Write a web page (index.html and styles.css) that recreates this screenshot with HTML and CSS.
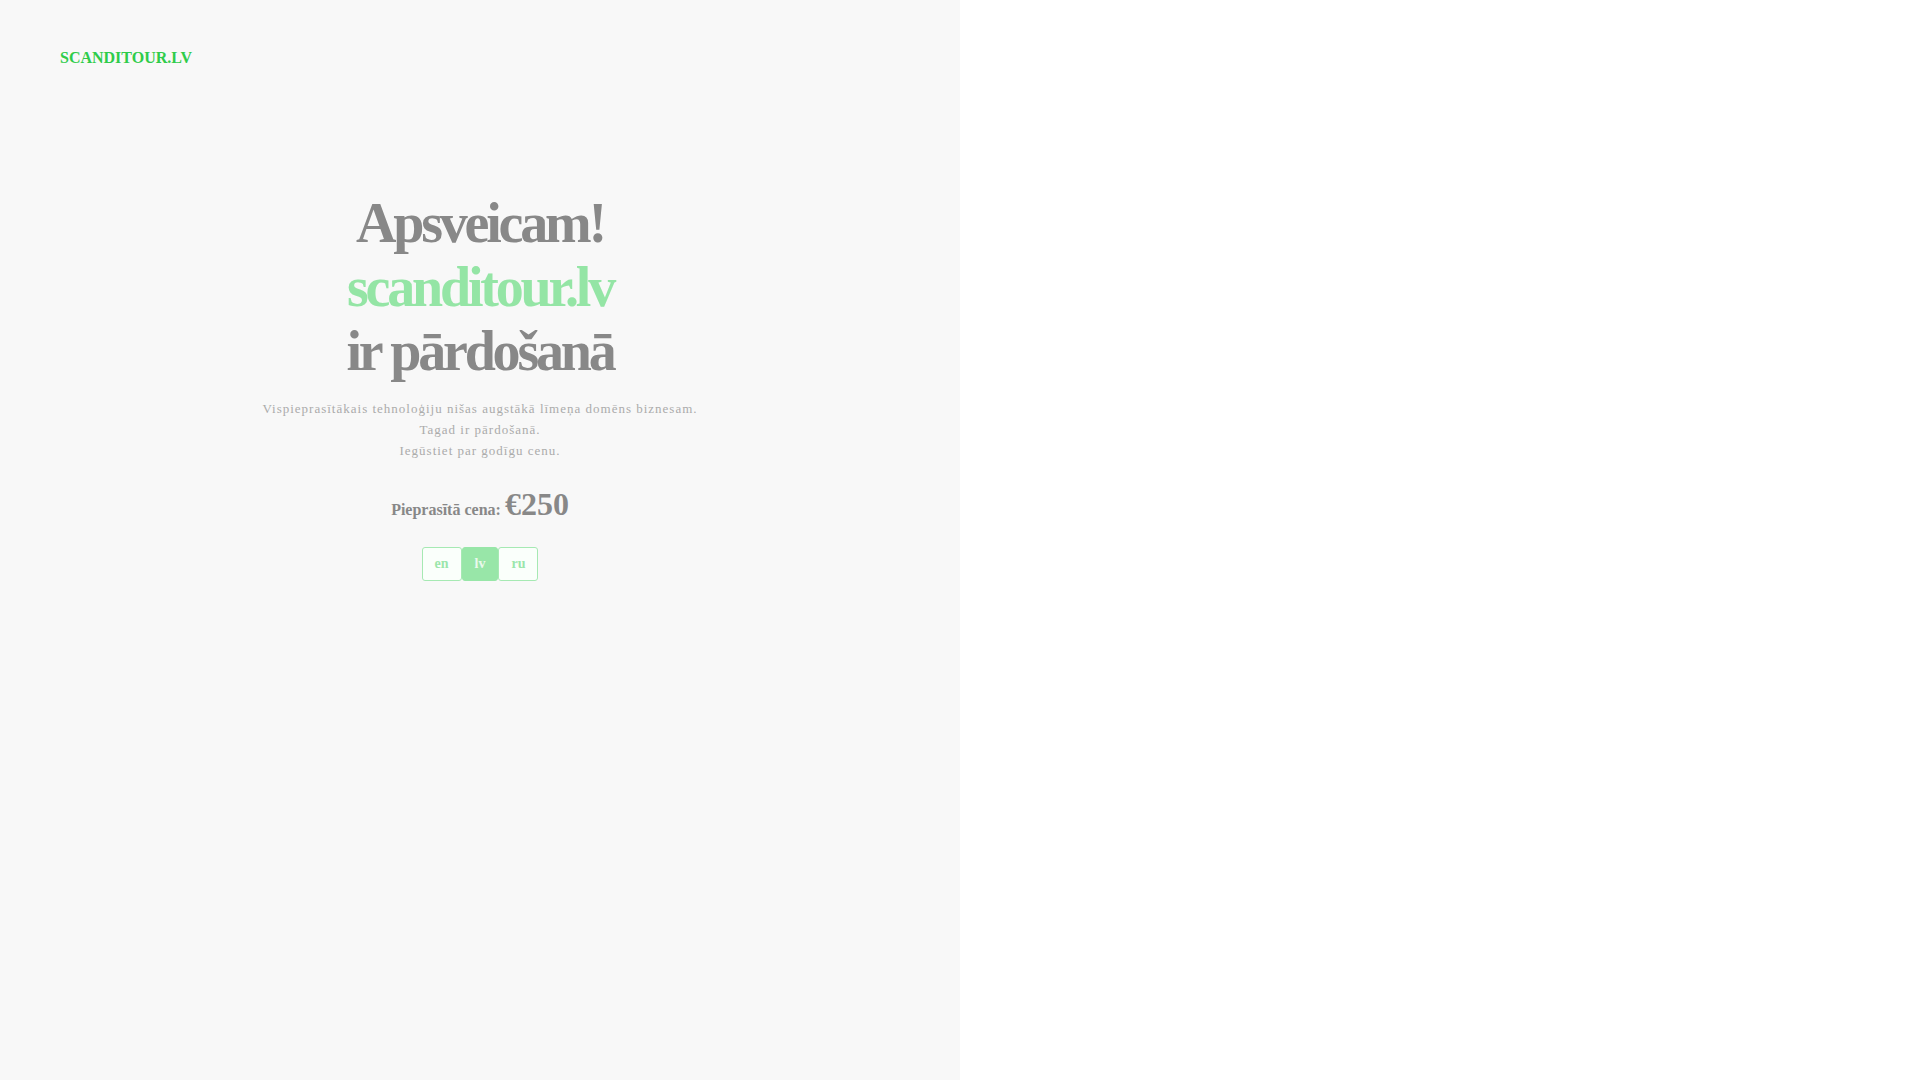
FILE: index.html
```html
<!DOCTYPE html>
<html lang="lv">
<head>
<meta charset="utf-8">
<title>scanditour.lv</title>
<link rel="stylesheet" href="styles.css">
</head>
<body>
<div class="page">
  <div class="panel">
    <header class="header">
      <a class="logo" href="#">SCANDITOUR.LV</a>
    </header>
    <main class="content">
      <h1 class="title">
        <span class="line">Apsveicam!</span>
        <span class="line domain">scanditour.lv</span>
        <span class="line">ir pārdošanā</span>
      </h1>
      <p class="desc">Vispieprasītākais tehnoloģiju nišas augstākā līmeņa domēns biznesam.<br>Tagad ir pārdošanā.<br>Iegūstiet par godīgu cenu.</p>
      <div class="price"><span class="price-label">Pieprasītā cena: </span>€250</div>
      <div class="langs">
        <a class="lang" href="#">en</a><a class="lang active" href="#">lv</a><a class="lang" href="#">ru</a>
      </div>
    </main>
  </div>
  <div class="side"></div>
</div>
</body>
</html>
```
FILE: styles.css
```css
html, body {
  margin: 0;
  padding: 0;
  height: 100%;
}
body {
  font-family: "Liberation Serif", "Times New Roman", serif;
  background: #ffffff;
}
.page {
  display: flex;
  height: 100vh;
}
.panel {
  width: 960px;
  flex: none;
  background: #f8f8f8;
  display: flex;
  flex-direction: column;
}
.side {
  flex: 1;
  background: #ffffff;
}
.header {
  padding: 49px 60px 0;
  line-height: 18px;
}
.logo {
  font-size: 16px;
  font-weight: bold;
  color: #2fcc4a;
  text-decoration: none;
}
.content {
  display: flex;
  flex-direction: column;
  align-items: center;
  text-align: center;
  padding-top: 124px;
}
.title {
  margin: 0;
  font-size: 56px;
  line-height: 64px;
  font-weight: bold;
  letter-spacing: -3.2px;
  color: #888888;
  display: flex;
  flex-direction: column;
  align-items: center;
}
.domain {
  color: #94e5a5;
}
.desc {
  margin: 15px 0 0;
  font-size: 13px;
  line-height: 21px;
  letter-spacing: 1px;
  color: #ababab;
}
.price {
  margin-top: 25px;
  font-size: 32px;
  line-height: 37px;
  font-weight: bold;
  color: #888888;
}
.price-label {
  font-size: 16px;
  line-height: 16px;
}
.langs {
  margin-top: 24px;
  display: flex;
}
.lang {
  display: block;
  font-size: 14px;
  line-height: 16px;
  font-weight: bold;
  padding: 8px 12px;
  border: 1px solid #a6e9b3;
  border-radius: 3px;
  color: #9be6ab;
  background: #fafffb;
  text-decoration: none;
}
.lang.active {
  background: #98e6a8;
  border-color: #98e6a8;
  color: #e9f9ec;
}
```
